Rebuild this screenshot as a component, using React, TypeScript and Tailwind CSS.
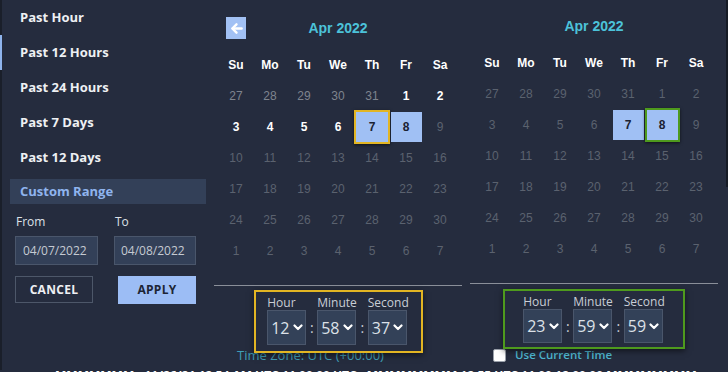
import React from "react";

type Kind = "prev" | "on" | "dim" | "sel" | "selY" | "selG";
type Cell = { d: number; k: Kind };

const heads = ["Su", "Mo", "Tu", "We", "Th", "Fr", "Sa"];

function mk(arr: number[], k: Kind): Cell[] {
  return arr.map((d) => ({ d, k }));
}

const leftRows: Cell[][] = [
  [...mk([27, 28, 29, 30, 31], "prev"), ...mk([1, 2], "on")],
  [...mk([3, 4, 5, 6], "on"), { d: 7, k: "selY" }, { d: 8, k: "sel" }, { d: 9, k: "dim" }],
  mk([10, 11, 12, 13, 14, 15, 16], "dim"),
  mk([17, 18, 19, 20, 21, 22, 23], "dim"),
  mk([24, 25, 26, 27, 28, 29, 30], "dim"),
  mk([1, 2, 3, 4, 5, 6, 7], "dim"),
];

const rightRows: Cell[][] = [
  mk([27, 28, 29, 30, 31, 1, 2], "dim"),
  [...mk([3, 4, 5, 6], "dim"), { d: 7, k: "sel" }, { d: 8, k: "selG" }, { d: 9, k: "dim" }],
  mk([10, 11, 12, 13, 14, 15, 16], "dim"),
  mk([17, 18, 19, 20, 21, 22, 23], "dim"),
  mk([24, 25, 26, 27, 28, 29, 30], "dim"),
  mk([1, 2, 3, 4, 5, 6, 7], "dim"),
];

function DayCell({ c }: { c: Cell }) {
  let inner: React.ReactNode;
  if (c.k === "sel") {
    inner = (
      <span className="flex h-[30px] w-[31px] shrink-0 items-center justify-center bg-[#a0c0f4] font-bold text-[#1b2232]">
        {c.d}
      </span>
    );
  } else if (c.k === "selY") {
    inner = (
      <span className="flex h-[34px] w-[36px] shrink-0 items-center justify-center border-2 border-[#e2b523] bg-[#a0c0f4] font-bold text-[#1b2232] shadow-[0_1px_3px_rgba(0,0,0,0.6)]">
        {c.d}
      </span>
    );
  } else if (c.k === "selG") {
    inner = (
      <span className="flex h-[34px] w-[35px] shrink-0 items-center justify-center border-2 border-[#4e9a1d] bg-[#a0c0f4] font-bold text-[#1b2232] shadow-[0_1px_3px_rgba(0,0,0,0.6)]">
        {c.d}
      </span>
    );
  } else if (c.k === "on") {
    inner = <span className="font-bold text-white">{c.d}</span>;
  } else if (c.k === "prev") {
    inner = <span className="text-[#7f848e]">{c.d}</span>;
  } else {
    inner = <span className="text-[#5b626f]">{c.d}</span>;
  }
  return <div className="flex h-[31px] items-center justify-center">{inner}</div>;
}

function Calendar({ rows, withArrow }: { rows: Cell[][]; withArrow: boolean }) {
  return (
    <div className="flex flex-col">
      <div className="flex h-[22px] items-center px-[12px]">
        {withArrow ? (
          <div className="flex h-[22px] w-[20px] items-center justify-center bg-[#a2c1f4]">
            <svg width="13" height="13" viewBox="0 0 14 14" fill="none">
              <path d="M12.5 7H3" stroke="white" strokeWidth="2.6" strokeLinecap="round" />
              <path d="M7 2.5L2.5 7L7 11.5" stroke="white" strokeWidth="2.6" strokeLinecap="round" strokeLinejoin="round" />
            </svg>
          </div>
        ) : (
          <div className="w-[20px]" />
        )}
        <div className="flex-1 text-center font-['Liberation_Sans',Arial,sans-serif] text-[14px] font-bold text-[#4cc2d9]">
          Apr 2022
        </div>
        <div className="w-[20px]" />
      </div>
      <div className="mt-[11px] px-[5px] font-['Liberation_Sans',Arial,sans-serif] text-[12px]">
        <div className="grid h-[30px] grid-cols-7 items-center">
          {heads.map((h) => (
            <div key={h} className="text-center font-bold text-white">
              {h}
            </div>
          ))}
        </div>
        {rows.map((r, i) => (
          <div key={i} className="grid grid-cols-7">
            {r.map((c, j) => (
              <DayCell key={j} c={c} />
            ))}
          </div>
        ))}
      </div>
    </div>
  );
}

function Chevron() {
  return (
    <svg width="10" height="7" viewBox="0 0 10 7" fill="none">
      <path d="M1.5 1.5L5 5L8.5 1.5" stroke="white" strokeWidth="2.2" strokeLinecap="round" strokeLinejoin="round" />
    </svg>
  );
}

function TimeSel({ label, value, h }: { label: string; value: string; h: string }) {
  return (
    <div className="flex flex-col">
      <div className="h-[15px] text-[12px] leading-[15px] text-[#c9ced6]">{label}</div>
      <div
        className={
          "flex w-[39px] items-center gap-[3px] border border-[#4a566b] bg-[#334158] pl-[3px] text-[16px] text-[#dde1e8] " +
          h
        }
      >
        <span>{value}</span>
        <Chevron />
      </div>
    </div>
  );
}

function Colon({ h }: { h: string }) {
  return <div className={"flex w-[11px] items-center justify-center text-[14px] text-[#c9ced6] " + h}>:</div>;
}

function TimeBox({
  vals,
  border,
  w,
  h,
  sel,
}: {
  vals: [string, string, string];
  border: string;
  w: string;
  h: string;
  sel: string;
}) {
  return (
    <div
      className={
        "relative z-10 flex items-start justify-center border-2 bg-[#252c3e] pt-[3px] shadow-[0_2px_6px_rgba(0,0,0,0.55)] " +
        border +
        " " +
        w +
        " " +
        h
      }
    >
      <div className="flex items-end">
        <TimeSel label="Hour" value={vals[0]} h={sel} />
        <Colon h={sel} />
        <TimeSel label="Minute" value={vals[1]} h={sel} />
        <Colon h={sel} />
        <TimeSel label="Second" value={vals[2]} h={sel} />
      </div>
    </div>
  );
}

const menu = ["Past Hour", "Past 12 Hours", "Past 24 Hours", "Past 7 Days", "Past 12 Days"];

export default function App() {
  return (
    <div className="relative h-[372px] w-[728px] overflow-hidden bg-[#252c3e] font-['Open_Sans',sans-serif]">
      <div className="flex h-[370px]">
        {/* Left panel */}
        <div className="flex w-[206px] shrink-0 flex-col border-l-2 border-[#1a1f2a]">
          {menu.map((m, i) => (
            <div
              key={m}
              className={
                "flex h-[35px] items-center pl-[18px] text-[13px] font-bold text-[#eef0f3] " +
                (i === 1 ? "-ml-[2px] border-l-2 border-[#8fb4ec]" : "")
              }
            >
              {m}
            </div>
          ))}
          <div className="mt-[4px] ml-[8px] flex h-[25px] items-center bg-[#334058] pl-[10px] text-[13px] font-bold text-[#8fb4ee]">
            Custom Range
          </div>
          <div className="mt-[10px] flex gap-[16px] pl-[13px]">
            <div className="flex flex-col">
              <div className="pl-[1px] text-[12px] leading-[16px] text-[#dde1e7]">From</div>
              <div className="mt-[6px] flex h-[29px] w-[83px] items-center border border-[#4a566b] bg-[#334058] pl-[7px] text-[12px] text-[#c5cad2]">
                04/07/2022
              </div>
            </div>
            <div className="flex flex-col">
              <div className="pl-[1px] text-[12px] leading-[16px] text-[#dde1e7]">To</div>
              <div className="mt-[6px] flex h-[29px] w-[82px] items-center border border-[#4a566b] bg-[#334058] pl-[6px] text-[12px] text-[#c5cad2]">
                04/08/2022
              </div>
            </div>
          </div>
          <div className="mt-[11px] flex gap-[25px] pl-[13px]">
            <div className="flex h-[27px] w-[78px] items-center justify-center border border-[#4d5769] text-[12px] font-bold tracking-[0.3px] text-[#eef0f3]">
              CANCEL
            </div>
            <div className="flex h-[28px] w-[78px] items-center justify-center bg-[#9cbdf5] text-[12px] font-bold tracking-[0.3px] text-[#1d2535]">
              APPLY
            </div>
          </div>
        </div>

        {/* Calendars */}
        <div className="flex gap-[8px] pl-[8px]">
          <div className="flex w-[248px] flex-col pt-[17px]">
            <Calendar rows={leftRows} withArrow />
            <div className="mt-[19px] h-px bg-[#8a8f99]" />
            <div className="mt-[4px] flex justify-center">
              <TimeBox
                vals={["12", "58", "37"]}
                border="border-[#e2b523]"
                w="w-[169px]"
                h="h-[63px]"
                sel="h-[35px]"
              />
            </div>
            <div className="-mt-[6px] pl-[23px] text-[13px] leading-[16px] text-[#3f9fb7]">Time Zone: UTC (+00:00)</div>
          </div>
          <div className="flex w-[248px] flex-col pt-[15px]">
            <Calendar rows={rightRows} withArrow={false} />
            <div className="mt-[19px] h-px bg-[#8a8f99]" />
            <div className="mt-[5px] flex justify-center">
              <TimeBox
                vals={["23", "59", "59"]}
                border="border-[#4e9a1d]"
                w="w-[182px]"
                h="h-[60px]"
                sel="h-[34px]"
              />
            </div>
            <div className="-mt-[1px] flex items-center gap-[9px] pl-[23px]">
              <div className="h-[13px] w-[13px] rounded-[2px] border border-[#9aa0aa] bg-white" />
              <span className="text-[11.5px] font-semibold leading-[14px] text-[#4db6cf]">Use Current Time</span>
            </div>
          </div>
        </div>
      </div>

      {/* cut-off content below */}
      <div className="flex gap-[10px] whitespace-nowrap pl-[55px] text-[12px] font-bold leading-[12px] text-white">
        <span>MMMMMMM</span>
        <span>11/26/21 12:54 AM UTC 11:00:00 UTC</span>
        <span>MMMMMMMM 12:55 UTC 11:00 12:00:00 MMMMMMMM</span>
      </div>

      {/* right-edge scroll strip */}
      <div className="absolute right-0 top-0 h-[187px] w-[2px] bg-[#161b25]" />
    </div>
  );
}
